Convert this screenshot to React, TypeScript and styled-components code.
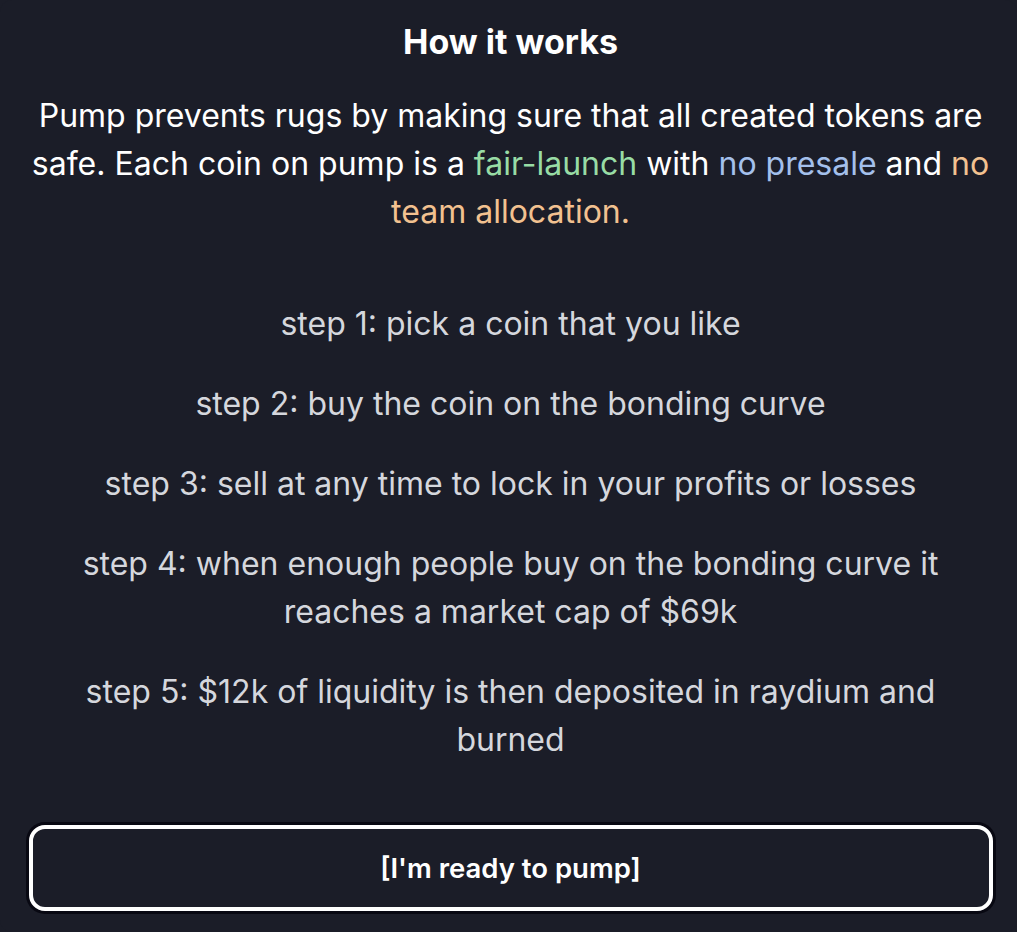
import React from "react";
import styled, { createGlobalStyle } from "styled-components";

const Global = createGlobalStyle`
  html, body { margin: 0; padding: 0; background: #1b1d28; }
  body { font-family: Inter, "Noto Sans", sans-serif; -webkit-font-smoothing: antialiased; }
`;

const Panel = styled.div`
  box-sizing: border-box;
  width: 1017px;
  height: 932px;
  background: #1b1d28;
  border-radius: 12px;
  display: flex;
  flex-direction: column;
  align-items: center;
  padding: 18px 22px 0 26px;
`;

const Title = styled.h2`
  margin: 0;
  font-size: 34px;
  line-height: 48px;
  font-weight: 700;
  color: #ffffff;
  text-align: center;
`;

const Intro = styled.p`
  margin: 26px 0 0;
  font-size: 32px;
  line-height: 48px;
  color: #ffffff;
  text-align: center;
`;

const Hl = styled.span<{ $c: string }>`
  color: ${(p) => p.$c};
`;

const Steps = styled.div`
  margin-top: 64px;
  display: flex;
  flex-direction: column;
  gap: 32px;
  align-items: center;
`;

const Step = styled.p`
  margin: 0;
  font-size: 32px;
  line-height: 48px;
  color: #d5d7dd;
  text-align: center;
  max-width: 880px;
`;

const Button = styled.button`
  box-sizing: border-box;
  margin-top: 61px;
  width: 964px;
  height: 86px;
  background: #1b1d28;
  border: 4px solid #ffffff;
  border-radius: 16px;
  box-shadow: 0 0 0 3px #080812;
  color: #ffffff;
  font-family: Inter, "Noto Sans", sans-serif;
  font-size: 27.5px;
  font-weight: 600;
  cursor: pointer;
`;

export default function App() {
  return (
    <>
      <Global />
      <Panel>
        <Title>How it works</Title>
        <Intro>
          Pump prevents rugs by making sure that all created tokens are safe. Each coin on pump is a{" "}
          <Hl $c="#98dca5">fair-launch</Hl> with <Hl $c="#a4c0ec">no presale</Hl> and{" "}
          <Hl $c="#f2c190">no team allocation.</Hl>
        </Intro>
        <Steps>
          <Step>step 1: pick a coin that you like</Step>
          <Step>step 2: buy the coin on the bonding curve</Step>
          <Step>step 3: sell at any time to lock in your profits or losses</Step>
          <Step>step 4: when enough people buy on the bonding curve it reaches a market cap of $69k</Step>
          <Step>step 5: $12k of liquidity is then deposited in raydium and burned</Step>
        </Steps>
        <Button>[I'm ready to pump]</Button>
      </Panel>
    </>
  );
}
